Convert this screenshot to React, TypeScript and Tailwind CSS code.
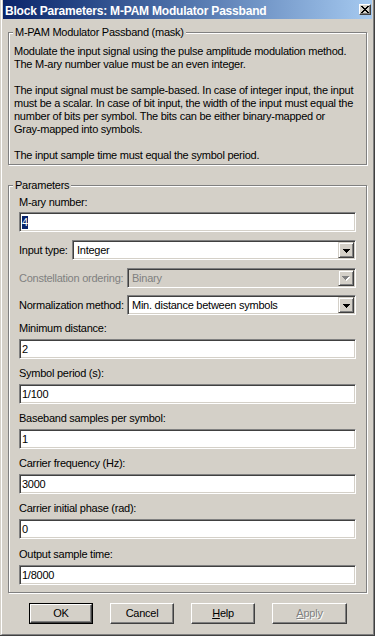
import React from "react";

const sunken =
  "border border-t-[#808080] border-l-[#808080] border-r-white border-b-white shadow-[inset_1px_1px_0_#404040,inset_-1px_-1px_0_#d4d0c8]";

function TextField({ value, selected }: { value: string; selected?: boolean }) {
  return (
    <div className={"h-[20px] bg-white flex items-center pl-[2px] " + sunken}>
      {selected ? (
        <span className="bg-[#0a246a] text-white leading-[13px]">{value}</span>
      ) : (
        <span className="leading-[13px]">{value}</span>
      )}
    </div>
  );
}

function Arrow({ disabled }: { disabled?: boolean }) {
  if (disabled) {
    return (
      <svg width="8" height="5" viewBox="0 0 8 5" shapeRendering="crispEdges">
        <path d="M1 1h7v1H1zM2 2h5v1H2zM3 3h3v1H3zM4 4h1v1H4z" fill="#ffffff" />
        <path d="M0 0h7v1H0zM1 1h5v1H1zM2 2h3v1H2zM3 3h1v1H3z" fill="#808080" />
      </svg>
    );
  }
  return (
    <svg width="7" height="4" viewBox="0 0 7 4" shapeRendering="crispEdges">
      <path d="M0 0h7v1H0zM1 1h5v1H1zM2 2h3v1H2zM3 3h1v1H3z" fill="#000000" />
    </svg>
  );
}

function Select({ value, disabled }: { value: string; disabled?: boolean }) {
  return (
    <div
      className={
        "flex-1 h-[20px] flex items-center p-px " +
        (disabled ? "bg-[#d4d0c8] text-[#808080] " : "bg-white ") +
        sunken
      }
    >
      <span className="flex-1 pl-[3px] leading-[13px] whitespace-nowrap">{value}</span>
      <div className="w-[16px] h-[16px] bg-[#d4d0c8] border border-t-[#d4d0c8] border-l-[#d4d0c8] border-r-[#404040] border-b-[#404040] shadow-[inset_1px_1px_0_#fff,inset_-1px_-1px_0_#808080] flex items-center justify-center pt-px">
        <Arrow disabled={disabled} />
      </div>
    </div>
  );
}

function Field({ label, value, selected, extraTop }: { label: string; value: string; selected?: boolean; extraTop?: boolean }) {
  return (
    <div className={extraTop ? "mt-[8px]" : "mt-[7px]"}>
      <div className="leading-[14px] whitespace-nowrap">{label}</div>
      <div className="mt-[4px]">
        <TextField value={value} selected={selected} />
      </div>
    </div>
  );
}

const raised =
  "border border-t-white border-l-white border-r-[#404040] border-b-[#404040] shadow-[inset_-1px_-1px_0_#808080] bg-[#d4d0c8]";

function CloseGlyph() {
  return (
    <svg width="8" height="7" viewBox="0 0 8 7" shapeRendering="crispEdges">
      <path
        d="M0 0h2v1H0zM6 0h2v1H6zM1 1h2v1H1zM5 1h2v1H5zM2 2h4v1H2zM3 3h2v1H3zM2 4h4v1H2zM1 5h2v1H1zM5 5h2v1H5zM0 6h2v1H0zM6 6h2v1H6z"
        fill="#000000"
      />
    </svg>
  );
}

export default function App() {
  return (
    <div className="w-[375px] h-[636px] bg-[#d4d0c8] flex border-r border-b border-r-[#404040] border-b-[#404040] pl-px font-['Liberation_Sans',Arial,sans-serif] text-[11px] tracking-[-0.25px] text-black overflow-hidden">
      <div className="flex-1 flex flex-col border-l border-l-white border-r border-r-[#808080] border-b border-b-[#808080] px-px">
        {/* Title bar */}
        <div className="h-[19px] shrink-0 flex items-center pt-[2px] pl-[2px] pr-[1px] bg-linear-to-r from-[#0a246a] to-[#a6caf0]">
          <span className="text-white font-bold text-[12px] tracking-[-0.2px] leading-[14px] whitespace-nowrap">
            Block Parameters: M-PAM Modulator Passband
          </span>
          <div className={"ml-auto w-[12px] h-[11px] -mt-[2px] flex items-center justify-center " + raised}>
            <CloseGlyph />
          </div>
        </div>

        {/* Description group */}
        <div className="relative mt-[13px] mx-[5px] border border-[#808080] shadow-[inset_1px_1px_0_#fff,1px_1px_0_#fff] pt-[12px] pl-[5px] pb-[2px] leading-[13px]">
          <span className="absolute -top-[7px] left-[4px] px-[2px] bg-[#d4d0c8] leading-[13px] whitespace-nowrap">
            M-PAM Modulator Passband (mask)
          </span>
          <div className="whitespace-nowrap">Modulate the input signal using the pulse amplitude modulation method.</div>
          <div className="whitespace-nowrap">The M-ary number value must be an even integer.</div>
          <div className="whitespace-nowrap mt-[13px]">The input signal must be sample-based. In case of integer input, the input</div>
          <div className="whitespace-nowrap">must be a scalar. In case of bit input, the width of the input must equal the</div>
          <div className="whitespace-nowrap">number of bits per symbol. The bits can be either binary-mapped or</div>
          <div className="whitespace-nowrap">Gray-mapped into symbols.</div>
          <div className="whitespace-nowrap mt-[13px]">The input sample time must equal the symbol period.</div>
        </div>

        {/* Parameters group */}
        <div className="relative mt-[20px] mx-[5px] border border-[#808080] shadow-[inset_1px_1px_0_#fff,1px_1px_0_#fff] pt-[9px] pl-[10px] pr-[10px] pb-[7px]">
          <span className="absolute -top-[7px] left-[4px] px-[2px] bg-[#d4d0c8] leading-[13px] whitespace-nowrap">
            Parameters
          </span>
          <div className="leading-[14px] whitespace-nowrap">M-ary number:</div>
          <div className="mt-[3px]">
            <TextField value="4" selected />
          </div>

          <div className="mt-[8px] flex items-center">
            <span className="w-[53px] shrink-0 leading-[13px] whitespace-nowrap">Input type:</span>
            <Select value="Integer" />
          </div>
          <div className="mt-[8px] flex items-center">
            <span className="w-[108px] shrink-0 leading-[13px] whitespace-nowrap text-[#808080]">Constellation ordering:</span>
            <Select value="Binary" disabled />
          </div>
          <div className="mt-[7px] flex items-center">
            <span className="w-[108px] shrink-0 leading-[13px] whitespace-nowrap">Normalization method:</span>
            <Select value="Min. distance between symbols" />
          </div>

          <div className="mt-[6px]">
            <div className="leading-[14px] whitespace-nowrap">Minimum distance:</div>
            <div className="mt-[4px]">
              <TextField value="2" />
            </div>
          </div>
          <Field label="Symbol period (s):" value="1/100" />
          <Field label="Baseband samples per symbol:" value="1" />
          <Field label="Carrier frequency (Hz):" value="3000" />
          <Field label="Carrier initial phase (rad):" value="0" />
          <Field label="Output sample time:" value="1/8000" extraTop />
        </div>

        {/* Buttons */}
        <div className="flex mt-[10px] ml-[26px] gap-[17px]">
          <div className="w-[64px] h-[21px] border border-black">
            <div className={"h-full flex items-center justify-center leading-[13px] " + raised}>OK</div>
          </div>
          <div className={"w-[64px] h-[21px] flex items-center justify-center leading-[13px] " + raised}>Cancel</div>
          <div className={"w-[64px] h-[21px] flex items-center justify-center leading-[13px] " + raised}>
            <span>
              <span className="underline">H</span>elp
            </span>
          </div>
          <div className={"w-[75px] h-[21px] flex items-center justify-center leading-[13px] text-[#808080] [text-shadow:1px_1px_0_#fff] " + raised}>
            <span>
              <span className="underline">A</span>pply
            </span>
          </div>
        </div>
      </div>
    </div>
  );
}
